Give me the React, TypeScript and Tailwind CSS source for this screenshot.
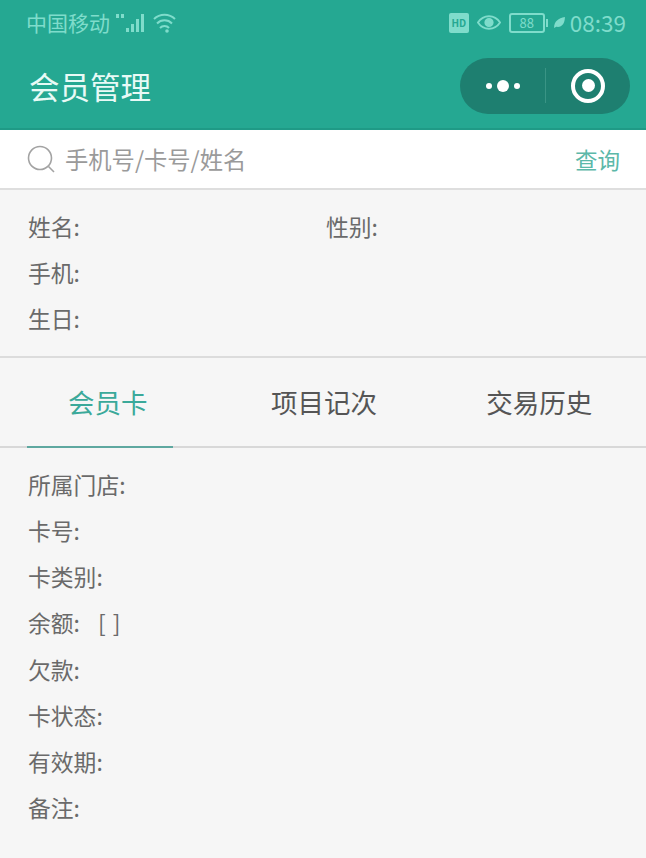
import React from "react";

const cardRows = ["所属门店:", "卡号:", "卡类别:", "余额:", "欠款:", "卡状态:", "有效期:", "备注:"];

const StatusBar = () => (
  <div className="flex h-[45px] items-center justify-between pl-[26px] pr-[20px] text-[#7fdccb]">
    <div className="flex items-center gap-[3px]">
      <span className="text-[21px] leading-none">中国移动</span>
      <svg width="64" height="24" viewBox="0 0 64 24" fill="currentColor">
        <rect x="3" y="3" width="3" height="4" />
        <rect x="8" y="3" width="3" height="4" />
        <rect x="13" y="17" width="3" height="4" />
        <rect x="18" y="13" width="3" height="8" />
        <rect x="23" y="8" width="3" height="13" />
        <rect x="28" y="3" width="3" height="18" />
        <path d="M41 8a15 15 0 0 1 21 0M44 12.5a10.5 10.5 0 0 1 15 0M47 17a6 6 0 0 1 9 0" fill="none" stroke="currentColor" strokeWidth="2" />
        <circle cx="54" cy="20" r="1.8" />
      </svg>
    </div>
    <div className="flex items-center">
      <span className="flex h-[20px] w-[20px] items-center justify-center rounded-[2px] bg-[#7fdccb] text-[10px] font-bold leading-none text-[#25a892]">HD</span>
      <svg className="ml-[8px]" width="24" height="17" viewBox="0 0 26 18" fill="none" stroke="currentColor" strokeWidth="2">
        <path d="M1 9c6-9 18-9 24 0c-6 9-18 9-24 0z" />
        <circle cx="13" cy="9" r="4" fill="currentColor" />
      </svg>
      <div className="ml-[8px] flex h-[20px] w-[36px] items-center justify-center rounded-[3px] border-2 border-[#7fdccb] text-[13px] leading-none">88</div>
      <div className="ml-[1px] h-[8px] w-[2px] bg-[#7fdccb]" />
      <svg className="ml-[5px]" width="13" height="13" viewBox="0 0 12 12" fill="currentColor">
        <path d="M1 11c0-6 4-9 10-10c0 6-3 10-8 9z" />
      </svg>
      <span className="ml-[4px] text-[22.5px] leading-none">08:39</span>
    </div>
  </div>
);

const Header = () => (
  <div className="flex h-[83px] items-center justify-between pl-[29px] pr-[16px]">
    <span className="text-[30.5px] leading-none text-[#e8faf6]">会员管理</span>
    <div className="mb-[2px] flex h-[56px] w-[170px] items-center rounded-full bg-[#1e7f70]">
      <div className="flex w-[85px] items-center justify-center gap-[5px] pl-[1px]">
        <span className="h-[6px] w-[6px] rounded-full bg-white" />
        <span className="h-[12px] w-[12px] rounded-full bg-white" />
        <span className="h-[6px] w-[6px] rounded-full bg-white" />
      </div>
      <div className="h-[35px] w-px bg-[#3a9485]" />
      <div className="flex w-[84px] items-center justify-center">
        <div className="flex h-[34px] w-[34px] items-center justify-center rounded-full border-[4px] border-white">
          <span className="h-[13px] w-[13px] rounded-full bg-white" />
        </div>
      </div>
    </div>
  </div>
);

export default function App() {
  return (
    <div className="h-[858px] w-[646px] overflow-hidden bg-[#f6f6f6] font-['Noto_Sans_CJK_SC',sans-serif] text-[#6a6a6a]">
      <div className="bg-[#25a892]">
        <StatusBar />
        <Header />
      </div>
      <div className="h-[2px] bg-[#1f9a86]" />

      <div className="flex h-[60px] items-center border-b-2 border-[#dedede] bg-white pl-[27px] pr-[26px]">
        <svg width="29" height="29" viewBox="0 0 29 29" fill="none" stroke="#a3a3a3" strokeWidth="1.6">
          <circle cx="13" cy="13" r="11.5" />
          <path d="M21.5 21.5L27 27" />
        </svg>
        <span className="ml-[9px] flex-1 pt-[2px] text-[23.3px] leading-none text-[#9a9a9a]">手机号/卡号/姓名</span>
        <span className="text-[22.5px] leading-none text-[#5cb8a9]">查询</span>
      </div>

      <div className="border-b-2 border-[#dcdcdc] pb-[14px] pl-[28px] pt-[14px] text-[22.8px] leading-[46px]">
        <div className="flex">
          <span className="w-[298px]">姓名:</span>
          <span>性别:</span>
        </div>
        <div>手机:</div>
        <div>生日:</div>
      </div>

      <div className="grid h-[90px] grid-cols-3 border-b-2 border-[#d8d8d8] text-[26.5px]">
        <div className="relative flex items-center justify-center pb-[1px] text-[#3ba99a]">
          会员卡
          <span className="absolute bottom-[-2px] left-[27px] h-[2px] w-[146px] bg-[#5fa8a0]" />
        </div>
        <div className="flex items-center justify-center pb-[1px] pl-[2px] text-[#555555]">项目记次</div>
        <div className="flex items-center justify-center pb-[1px] pl-[2px] text-[#555555]">交易历史</div>
      </div>

      <div className="pl-[28px] pt-[14px] text-[22.8px] leading-[46.15px]">
        {cardRows.map((row) => (
          <div key={row}>
            {row}
            {row === "余额:" && <span className="ml-[18px] tracking-[1px]">[ ]</span>}
          </div>
        ))}
      </div>
    </div>
  );
}
